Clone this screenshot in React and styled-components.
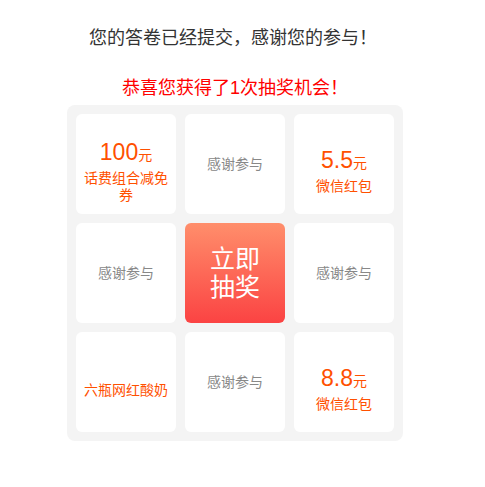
import React from 'react';
import styled, { createGlobalStyle } from 'styled-components';

const GlobalStyle = createGlobalStyle`
  html, body {
    margin: 0;
    padding: 0;
    background: #fff;
  }
  body {
    font-family: "Liberation Sans", "Noto Sans CJK SC", sans-serif;
  }
`;

const Page = styled.div`
  width: 470px;
  display: flex;
  flex-direction: column;
  align-items: center;
`;

const Title = styled.h2`
  margin: 26px 0 0;
  padding-right: 4px;
  font-size: 18px;
  line-height: 24px;
  font-weight: 400;
  color: #333;
`;

const Notice = styled.p`
  margin: 26px 0 0;
  font-size: 18px;
  line-height: 24px;
  color: #ff0000;
`;

const Board = styled.div`
  margin-top: 5px;
  padding: 9px;
  border-radius: 8px;
  background: #f4f4f4;
  display: grid;
  grid-template-columns: repeat(3, 100px);
  grid-auto-rows: 100px;
  gap: 9px;
`;

const Cell = styled.div`
  border-radius: 6px;
  background: #fff;
  display: flex;
  flex-direction: column;
  align-items: center;
  justify-content: center;
  padding: 0 6px;
  text-align: center;
`;

const Prize = styled.div`
  padding-top: 14px;
  color: #ff5000;
  display: flex;
  flex-direction: column;
  align-items: center;
`;

const Amount = styled.div`
  font-size: 23px;
  line-height: 26px;
  span {
    font-size: 14px;
  }
`;

const PrizeName = styled.div`
  margin-top: 2px;
  font-size: 14px;
  line-height: 17px;
`;

const Thanks = styled.div`
  font-size: 14px;
  line-height: 17px;
  color: #888;
`;

const DrawButton = styled.button`
  border: none;
  border-radius: 6px;
  padding: 0 20px;
  background: linear-gradient(180deg, #ff8e6b 0%, #fb4343 100%);
  color: #fff;
  font-family: inherit;
  font-size: 25px;
  line-height: 28px;
  cursor: pointer;
`;

const prizes = [
  { amount: '100', name: '话费组合减免券' },
  null,
  { amount: '5.5', name: '微信红包' },
  null,
  'draw',
  null,
  { name: '六瓶网红酸奶' },
  null,
  { amount: '8.8', name: '微信红包' },
];

export default function App() {
  return (
    <>
      <GlobalStyle />
      <Page>
        <Title>您的答卷已经提交，感谢您的参与！</Title>
        <Notice>恭喜您获得了1次抽奖机会！</Notice>
        <Board>
          {prizes.map((p, i) => {
            if (p === 'draw') {
              return <DrawButton key={i}>立即<br />抽奖</DrawButton>;
            }
            return (
              <Cell key={i}>
                {p ? (
                  <Prize>
                    {p.amount && (
                      <Amount>
                        {p.amount}
                        <span>元</span>
                      </Amount>
                    )}
                    <PrizeName>{p.name}</PrizeName>
                  </Prize>
                ) : (
                  <Thanks>感谢参与</Thanks>
                )}
              </Cell>
            );
          })}
        </Board>
      </Page>
    </>
  );
}
